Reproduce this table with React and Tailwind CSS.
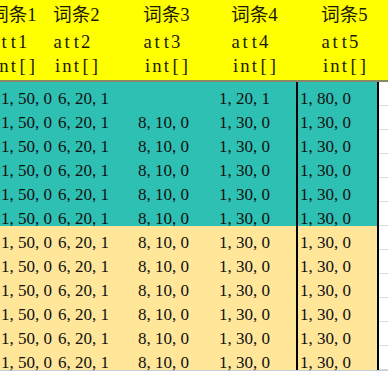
const headers = [
  ["词条1", "att1", "int[]"],
  ["词条2", "att2", "int[]"],
  ["词条3", "att3", "int[]"],
  ["词条4", "att4", "int[]"],
  ["词条5", "att5", "int[]"],
];

const fullRow = ["1, 50, 0", "6, 20, 1", "8, 10, 0", "1, 30, 0", "1, 30, 0"];

const rows = [
  { tone: "teal", cells: ["1, 50, 0", "6, 20, 1", "", "1, 20, 1", "1, 80, 0"] },
  { tone: "teal", cells: fullRow },
  { tone: "teal", cells: fullRow },
  { tone: "teal", cells: fullRow },
  { tone: "teal", cells: fullRow },
  { tone: "teal", cells: fullRow },
  { tone: "gold", cells: fullRow },
  { tone: "gold", cells: fullRow },
  { tone: "gold", cells: fullRow },
  { tone: "gold", cells: fullRow },
  { tone: "gold", cells: fullRow },
  { tone: "gold", cells: fullRow },
];

// 宋体风格：半角字符占半格，汉字占一格
function Fixed({ text }) {
  return [...text].map((ch, i) => (
    <span
      key={i}
      className={/[\u4e00-\u9fff]/.test(ch) ? "inline-block w-[1em] text-center" : "inline-block w-[0.5em] text-center"}
    >
      {ch}
    </span>
  ));
}

function HeaderCell({ lines, className }) {
  return (
    <div className={className}>
      <div className="h-[27px] pt-[5px] leading-[20px] whitespace-nowrap"><Fixed text={lines[0]} /></div>
      <div className="h-[26px] pt-[5px] leading-[20px] whitespace-nowrap"><Fixed text={lines[1]} /></div>
      <div className="h-[27px] pt-[3px] leading-[20px] whitespace-nowrap"><Fixed text={lines[2]} /></div>
    </div>
  );
}

function Row({ cells, tone }) {
  const fill = tone === "teal" ? "bg-[#2ec0b3]" : "bg-[#ffe699]";
  return (
    <div className="flex h-6 text-[17px] leading-[14px] text-[#111111]">
      <div className={`${fill} w-[55px] shrink-0 flex items-end pl-[1px] whitespace-nowrap`}>{cells[0]}</div>
      <div className={`${fill} w-[81px] shrink-0 flex items-end pl-[3px] whitespace-nowrap`}>{cells[1]}</div>
      <div className={`${fill} w-[81px] shrink-0 flex items-end pl-[2px] whitespace-nowrap`}>{cells[2]}</div>
      <div className={`${fill} w-[79px] shrink-0 flex items-end pl-[2px] whitespace-nowrap`}>{cells[3]}</div>
      <div className={`${fill} w-[83px] shrink-0 flex items-end pl-[2px] border-x-2 border-black whitespace-nowrap`}>{cells[4]}</div>
      <div className="flex-1 bg-white border-b border-[#dadada]" />
    </div>
  );
}

export default function App() {
  return (
    <div className="w-[388px] h-[372px] overflow-hidden bg-white font-['Liberation_Serif','Noto_Sans_CJK_SC',serif]">
      <div className="flex h-[80px] bg-[#ffff00] text-[18.67px] text-[#1a1a00] overflow-hidden">
        <HeaderCell lines={headers[0]} className="w-[63px] shrink-0 -ml-[10px]" />
        <HeaderCell lines={headers[1]} className="w-[90px] shrink-0" />
        <HeaderCell lines={headers[2]} className="w-[88px] shrink-0" />
        <HeaderCell lines={headers[3]} className="w-[90px] shrink-0" />
        <HeaderCell lines={headers[4]} className="flex-1" />
      </div>
      <div className="h-[2px] bg-[#8a8a62]" />
      {rows.map((r, i) => (
        <Row key={i} cells={r.cells} tone={r.tone} />
      ))}
      <div className="h-px bg-[#c5cdd8]" />
    </div>
  );
}
